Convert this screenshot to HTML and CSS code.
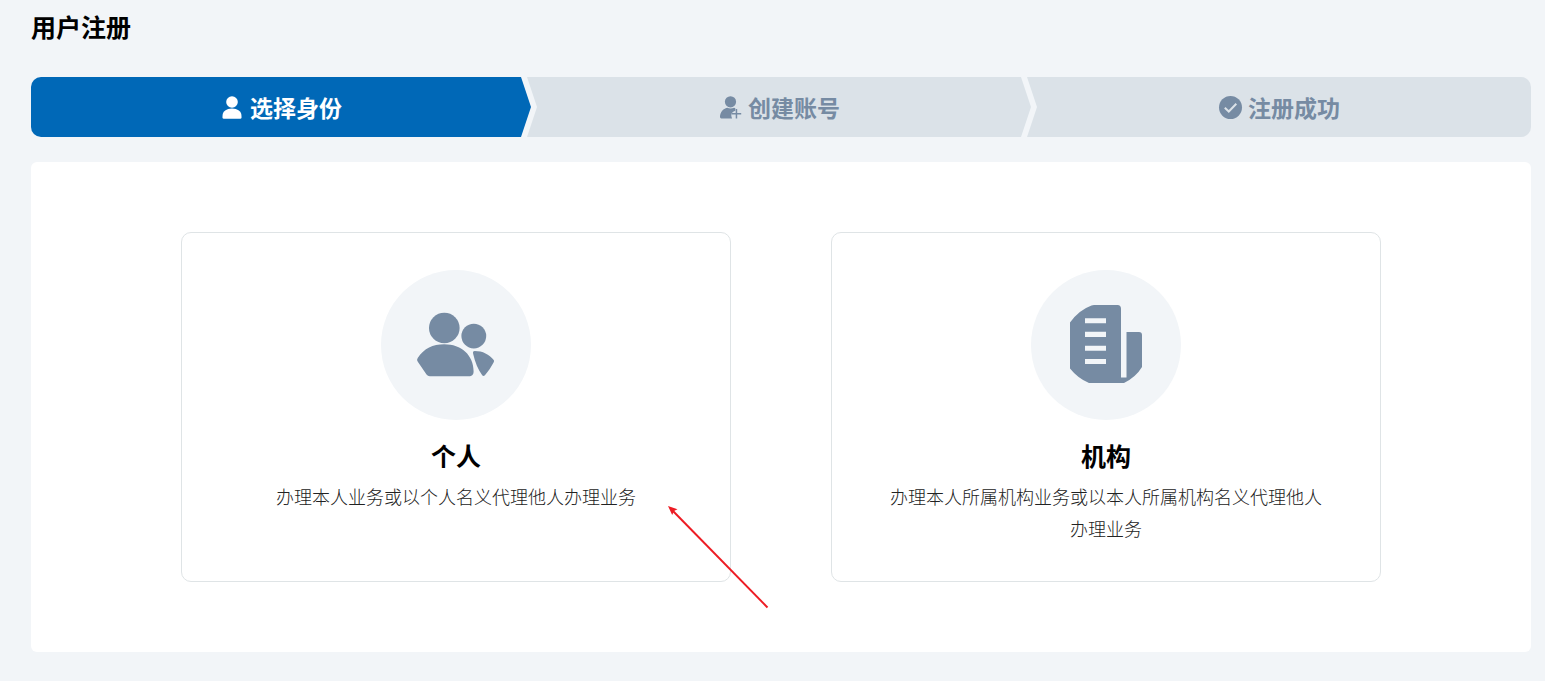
FILE: index.html
```html
<!DOCTYPE html>
<html lang="zh-CN">
<head>
<meta charset="utf-8">
<meta name="viewport" content="width=device-width, initial-scale=1">
<title>用户注册</title>
<link rel="stylesheet" href="styles.css">
</head>
<body>
<main class="page">
  <h1 class="page-title">用户注册</h1>

  <ol class="steps">
    <li class="step step-first step-active" aria-current="step">
      <svg class="step-icon" viewBox="0 0 24 24" aria-hidden="true">
        <circle cx="12" cy="7" r="5.800"/>
        <path d="M2.500 22.500v-1.600C2.500 16.500 6.500 13.600 12 13.600s9.500 2.900 9.500 7.300v1.600q0 1.300-1.300 1.300H3.800q-1.300 0-1.300-1.300z"/>
      </svg>
      <span>选择身份</span>
    </li>
    <li class="step">
      <svg class="step-icon" viewBox="0 0 24 24" aria-hidden="true">
        <circle cx="12.500" cy="6.800" r="5.600"/>
        <path d="M2 22C2 17 5 13.700 9.200 12.700q3.300 1.400 6.900 0l1.200.6v2.400c-2.500.8-4 2.600-4 4.500 0 1.200.3 2.200.9 3.200H3.300Q2 23.400 2 22z"/>
        <path d="M17.700 14.100h1.500v4h4v1.500h-4v4h-1.500v-4h-4v-1.500h4z"/>
      </svg>
      <span>创建账号</span>
    </li>
    <li class="step step-last">
      <svg class="step-icon" viewBox="0 0 24 24" aria-hidden="true">
        <circle cx="12.500" cy="12.500" r="11.500"/>
        <path class="step-check" d="M6.800 12.700l4 3.800 7.500-7.700"/>
      </svg>
      <span>注册成功</span>
    </li>
  </ol>

  <section class="panel" aria-label="选择身份">
    <div class="card-wrap">
      <a class="card" href="#personal">
        <span class="card-badge">
          <svg class="card-icon" viewBox="0 0 80 80" aria-hidden="true">
            <circle cx="28.300" cy="23" r="15.300"/>
            <circle cx="57.800" cy="31.100" r="12.400"/>
            <path d="M1.700 53C8.500 43 16.500 39.200 28.300 39.200c17 0 29.300 11 29.300 27 0 3.500-1.300 5-5 5H13.800q-2 0-3.300-1.700L1.800 56.800q-1.500-1.700-.1-3.800z"/>
            <path d="M58.700 45.900c8 0 14.500 3.400 19 9q.8 1 0 2.300c-2.600 5-5.500 9.300-8.800 13q-1.500 1.600-2.700 0c-4-5.700-7.200-13-9-21.300q-.8-3 1.500-3z"/>
          </svg>
        </span>
        <strong class="card-title">个人</strong>
        <span class="card-text">办理本人业务或以个人名义代理他人办理业务</span>
      </a>
      <svg class="pointer" viewBox="0 0 102 104" aria-hidden="true">
        <path class="pointer-line" d="M4 4l95.500 97.500"/>
        <path class="pointer-head" d="M0 0l9.500 3.200-3.500 1.800-1.800 4z"/>
      </svg>
    </div>
    <div class="card-wrap">
      <a class="card" href="#organization">
        <span class="card-badge">
          <svg class="card-icon" viewBox="0 0 80 80" aria-hidden="true">
            <path fill-rule="evenodd" d="M28 0h23.500q3.500 0 3.500 3.800V72.500h5.500V27H73q3 0 3 3v32q-6 10-18 16H23Q12 73.500 4 63.500V17.500Q13 5 25.500.5q1.200-.5 2.500-.5zM19 13.300v5h21v-5zm0 13.400v5.200h21v-5.200zm0 14v5h21v-5zm0 13.200v5.200h21v-5.200z"/>
          </svg>
        </span>
        <strong class="card-title">机构</strong>
        <span class="card-text">办理本人所属机构业务或以本人所属机构名义代理他人办理业务</span>
      </a>
    </div>
  </section>
</main>
</body>
</html>
```
FILE: styles.css
```css
*,
*::before,
*::after {
  box-sizing: border-box;
}

body {
  margin: 0;
  background: #f2f5f8;
  color: #000;
  font-family: "Noto Sans CJK SC", "Noto Sans", sans-serif;
}

.page {
  padding: 9px 14px 29px 31px;
}

.page-title {
  margin: 0 0 33px;
  font-size: 25px;
  line-height: 35px;
  font-weight: 700;
}

.steps {
  display: grid;
  grid-template-columns: repeat(3, 1fr);
  margin: 0 0 25px;
  padding: 0;
  list-style: none;
  border-radius: 10px;
  overflow: hidden;
}

.step {
  display: flex;
  align-items: center;
  justify-content: center;
  gap: 6px;
  height: 60px;
  margin-left: -4px;
  background: #dbe2e8;
  color: #768ba3;
  font-size: 23px;
  line-height: 32px;
  font-weight: 700;
  clip-path: polygon(0 0, calc(100% - 10px) 0, 100% 50%, calc(100% - 10px) 100%, 0 100%, 10px 50%);
}

.step-first {
  margin-left: 0;
  clip-path: polygon(0 0, calc(100% - 10px) 0, 100% 50%, calc(100% - 10px) 100%, 0 100%);
}

.step-last {
  clip-path: polygon(0 0, 100% 0, 100% 100%, 0 100%, 10px 50%);
}

.step-active {
  background: #0068b7;
  color: #fff;
}

.step-icon {
  width: 24px;
  height: 24px;
  fill: currentColor;
  overflow: visible;
}

.step-check {
  fill: none;
  stroke: #dbe2e8;
  stroke-width: 2;
}

.panel {
  display: grid;
  grid-template-columns: repeat(2, 1fr);
  gap: 100px;
  padding: 70px 10%;
  border-radius: 6px;
  background: #fff;
}

.card-wrap {
  position: relative;
  display: grid;
}

.card {
  display: flex;
  flex-direction: column;
  align-items: center;
  min-height: 350px;
  padding: 37px 10% 35px;
  border: 1px solid #dfe4e6;
  border-radius: 10px;
  color: inherit;
  text-align: center;
  text-decoration: none;
}

.card-badge {
  display: grid;
  place-items: center;
  width: 150px;
  height: 150px;
  border-radius: 50%;
  background: #f2f5f8;
}

.card-icon {
  width: 80px;
  height: 80px;
  fill: #768ba3;
}

.card-title {
  margin: 18px 0 7px;
  font-size: 25px;
  line-height: 35px;
}

.card-text {
  color: #222;
  font-size: 18px;
  font-weight: 300;
  line-height: 32px;
}

.pointer {
  position: absolute;
  top: 274px;
  right: -39px;
  width: 102px;
  height: 104px;
  pointer-events: none;
}

.pointer-line {
  fill: none;
  stroke: #ed1c24;
  stroke-width: 2;
}

.pointer-head {
  fill: #ed1c24;
}
```
